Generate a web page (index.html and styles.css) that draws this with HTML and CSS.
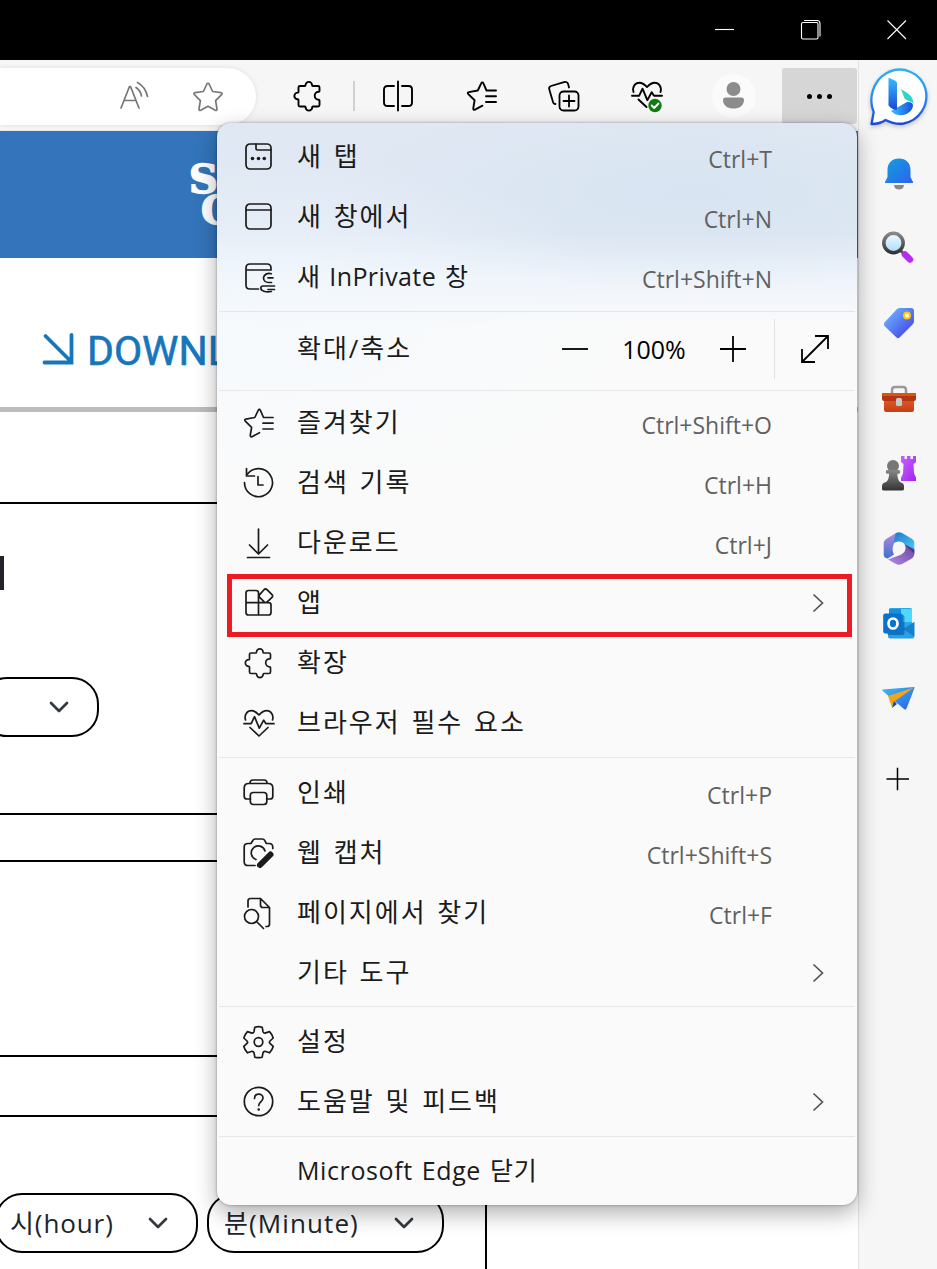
FILE: index.html
```html
<!DOCTYPE html>
<html lang="ko">
<head>
<meta charset="utf-8">
<title>Microsoft Edge</title>
<link rel="stylesheet" href="styles.css">
</head>
<body>
<svg class="defs" width="0" height="0">
  <defs>
    <symbol id="puzzle" viewBox="0 0 32 32"><path d="M6.5 7.500q0-1.500 1.500-1.500h4.800q.7 0 .7-.8a3.300 3.300 0 0 1 6.600 0q0 .8.700.8h5.200q1.500 0 1.500 1.500v3.500q0 .8-.8.800a4 4 0 0 0 0 8q.8 0 .8.800v4.400q0 1.500-1.500 1.500h-5q-.8 0-.8.800a3.300 3.300 0 0 1-6.600 0q0-.8-.8-.8H8q-1.500 0-1.500-1.500v-4.900q0-.8-.8-.8a3.300 3.300 0 0 1 0-6.700q.8 0 .8-.7z"/></symbol>
    <symbol id="favs" viewBox="0 0 32 32"><path d="M30 10.500h-9.500l-3.100-7.200c-.5-1.200-1.700-1.200-2.200 0l-3.400 7.200-9 1.600c-1.300.2-1.300 1.300-.5 2l6.300 6.200-1.300 7.800c-.2 1.500.7 2.100 1.700 1.600l7.500-4M20 16.200h10M20 22h10"/></symbol>
    <symbol id="heart" viewBox="0 0 32 32"><path d="M2.500 13C1 8 4 3.700 8.500 3.700c3.500 0 5.500 2.300 7.500 4.300 2-2 4-4.300 7.500-4.300C28 3.700 31 8 29.500 13M1 16.700h7.200l3.300-7 4.800 11.500 4.400-8 2.300 3.500H31M7 20.500l9 8.500 9-8.500"/></symbol>
    <symbol id="chev" viewBox="0 0 12 20"><path d="M1.500 1.500 10.500 10l-9 8.500"/></symbol>
    <symbol id="down" viewBox="0 0 20 12"><path d="m2 2 8 8 8-8"/></symbol>
    <linearGradient id="gb" x1="0" y1="0" x2="0" y2="1"><stop offset="0" stop-color="#2cb0f0"/><stop offset=".5" stop-color="#2a8cf0"/><stop offset="1" stop-color="#1b49d6"/></linearGradient>
    <linearGradient id="gbar" x1="0" y1="0" x2="0" y2="1"><stop offset="0" stop-color="#37bdff"/><stop offset="1" stop-color="#1a4ad8"/></linearGradient>
    <linearGradient id="gbowl" x1="0" y1="0" x2="1" y2="0"><stop offset="0" stop-color="#36c3fa"/><stop offset="1" stop-color="#1b4fe0"/></linearGradient>
    <linearGradient id="gbell" x1="0" y1="0" x2="1" y2="1"><stop offset="0" stop-color="#13a0dc"/><stop offset="1" stop-color="#2c63f0"/></linearGradient>
    <linearGradient id="gtag" x1="0" y1="0" x2="1" y2="1"><stop offset="0.1" stop-color="#70b4ff"/><stop offset="1" stop-color="#3a35e4"/></linearGradient>
    <linearGradient id="ggray" x1="0" y1="0" x2="0" y2="1"><stop offset="0" stop-color="#888"/><stop offset="1" stop-color="#333"/></linearGradient>
    <linearGradient id="gpurple" x1="0" y1="0" x2="1" y2="1"><stop offset="0" stop-color="#c465ff"/><stop offset="1" stop-color="#a422ef"/></linearGradient>
    <linearGradient id="gred" x1="0" y1="0" x2="0" y2="1"><stop offset="0" stop-color="#e8642c"/><stop offset="1" stop-color="#c43e17"/></linearGradient>
    <linearGradient id="glens" x1="0" y1="0" x2="0" y2="1"><stop offset="0" stop-color="#f3fbff"/><stop offset="1" stop-color="#a9dafa"/></linearGradient>
    <linearGradient id="gteal" x1="0" y1="0" x2="1" y2="1"><stop offset="0" stop-color="#2370cc"/><stop offset="1" stop-color="#45d6f4"/></linearGradient>
    <linearGradient id="glilac" x1="1" y1="0" x2="0" y2="1"><stop offset="0" stop-color="#64449e"/><stop offset="1" stop-color="#b58be8"/></linearGradient>
    <linearGradient id="gleft" x1="0" y1="0" x2="0" y2="1"><stop offset="0" stop-color="#b38bdd"/><stop offset="1" stop-color="#3c6fce"/></linearGradient>
    <linearGradient id="gsky" x1="0" y1="0" x2="1" y2="1"><stop offset="0" stop-color="#3cbdf3"/><stop offset="1" stop-color="#2b5fe8"/></linearGradient>
  </defs>
</svg>

<header class="titlebar">
  <svg width="20" height="20"><path d="M0 9.500h19"/></svg>
  <svg width="20" height="20"><rect x=".5" y="2.500" width="16.500" height="16.500" rx="1.500"/><path d="M3 .5h13q3 0 3 3v13"/></svg>
  <svg width="20" height="20"><path d="m.5.5 18.500 18.500M19 .5.500 19"/></svg>
</header>

<div class="body">
  <div class="main">
    <div class="toolbar">
      <div class="url">
        <svg width="32" height="32" viewBox="0 0 32 32"><path d="m3 27 8.500-21.500h1L21 27M6 19.500h12M18 6.500q4.500 3 5.500 8.500M19.500 1.500q8 4.500 10 14"/></svg>
        <svg width="32" height="32" viewBox="0 0 32 32"><path d="M14.900 3c.5-1 1.700-1 2.200 0l3.500 7.500 8.300 1.100c1.200.2 1.500 1.300.7 2.100l-6 5.900 1.400 8.400c.2 1.200-.7 1.800-1.700 1.300L16 25.300l-7.300 4c-1 .5-1.900-.1-1.700-1.300l1.400-8.400-6-5.900c-.8-.8-.5-1.900.7-2.100l8.300-1.100z"/></svg>
      </div>
      <div class="tools">
        <svg class="t-puzzle" width="32" height="32"><use href="#puzzle"/></svg>
        <span class="divider"></span>
        <svg class="t-split" width="32" height="32" viewBox="0 0 32 32"><path d="M12 6H5.500Q2 6 2 9.500v13Q2 26 5.500 26H12M20 6h6.500Q30 6 30 9.500v13q0 3.500-3.500 3.500H20M16 1.500v29"/></svg>
        <svg class="t-favs" width="32" height="32"><use href="#favs"/></svg>
        <svg class="t-coll" width="32" height="32" viewBox="0 0 32 32"><rect x="11.500" y="11.500" width="19" height="19" rx="4"/><path d="M21 15.500v11M15.500 21h11M7.500 24c-1.500.3-2.200-.7-2.500-2L1.300 9.500C.7 7.500 1.500 6.500 3 6l13-3.800c2-.6 3.700 0 4.200 2l.8 3.300"/></svg>
        <svg class="t-heart" width="32" height="34" viewBox="0 0 32 34"><path d="M2.500 13C1 8 4 3.700 8.500 3.700c3.500 0 5.500 2.300 7.500 4.300 2-2 4-4.300 7.500-4.300C28 3.700 31 8 29.500 13M1 16.700h7.200l3.300-7 4.800 11.500 4.400-8 2.300 3.500H31M7.500 20.500 15.500 28"/><circle cx="24" cy="26.500" r="6.700" fill="#107c10" stroke="none"/><path d="m20.700 26.500 2.500 2.500 4.300-4.500" stroke="#fff"/></svg>
        <svg class="avatar" width="44" height="44" viewBox="0 0 44 44"><circle cx="22" cy="22" r="22" fill="#fbfbfb"/><circle cx="21.500" cy="15" r="7"/><path d="M11 26q0-2.500 2.500-2.500h16q2.500 0 2.500 2.500c0 6-5 8.500-10.500 8.500S11 32 11 26"/></svg>
        <div class="more"><i></i><i></i><i></i></div>
      </div>
    </div>

    <div class="page">
      <div class="banner"><div class="logo"><b>S</b><b class="second">O</b></div></div>
      <div class="download">
        <svg width="32" height="32" viewBox="0 0 32 32"><path d="m2.500 2 26 26M28.500 1v27.500H1.500"/></svg>
        <span>DOWNL</span>
      </div>
      <div class="box box-a">
        <div class="heading-end"></div>
        <div class="select select-a"><svg width="20" height="12"><use href="#down"/></svg></div>
      </div>
      <div class="box box-b"></div>
      <div class="box box-c">
        <div class="select hour"><span>시(hour)</span><svg width="20" height="12"><use href="#down"/></svg></div>
        <div class="select minute"><span>분(Minute)</span><svg width="20" height="12"><use href="#down"/></svg></div>
      </div>
    </div>
  </div>

  <aside class="sidebar">
    <svg class="bing" width="60" height="62" viewBox="0 0 60 62"><path d="M2.500 57 4.700 45C-1 32 4 14 17 6.500 33-3 52 6 56.500 22c4 17-7 32-22 34.500-7 1-13-1-18-3.500-4 3-8 4-14 4z" fill="#fff" stroke="url(#gb)" stroke-width="2.300" stroke-linejoin="round"/><path d="m32 22 7 4.500q5.500 4 5.500 11-1-3-6-4l-3-2z" fill="#2bd6c8"/><path d="m22 44 16-9q6-.5 6 4c-1 6-8 10.500-14.500 9q-5-1-7.500-4" fill="url(#gbowl)"/><path d="m19.500 10.700 6.500 2.800q2 .8 2 3v26q-4.500 1-8.500-4z" fill="url(#gbar)"/></svg>
    <svg class="app" viewBox="0 0 40 40"><path d="M15 31h10q-.5 4.500-5 4.500T15 31" fill="#888"/><path d="M8.500 16C8.500 9 13 4.500 20 4.500S31.500 9 31.500 16v7l2.500 5v1H6v-1l2.500-5z" fill="url(#gbell)"/></svg>
    <svg class="app" viewBox="0 0 40 40"><path d="m21 21 5 5" stroke="#555" stroke-width="3"/><circle cx="14.500" cy="14" r="9.700" fill="url(#glens)" stroke="url(#ggray)" stroke-width="3.500"/><path d="m26 25.500 5 5" stroke="#b52df2" stroke-width="6.500" stroke-linecap="round"/></svg>
    <svg class="app" viewBox="0 0 40 40"><path d="M18 5q1-1 3-1h11q3 0 3 3v10q0 2-1.500 3.500L20.500 33.500q-1.500 1.500-3 0l-12-11.500q-1.500-2 0-3.500z" fill="url(#gtag)"/><circle cx="28" cy="11.500" r="3" fill="#fff8d0" stroke="#ffc800" stroke-width="2"/></svg>
    <svg class="app" viewBox="0 0 40 40"><path d="M13 14v-3q0-3 3-3h8q3 0 3 3v3" fill="none" stroke="#999" stroke-width="2.500"/><rect x="5" y="16" width="30" height="17" rx="2" fill="url(#gred)"/><path d="M4 14h32q1 0 1 1v5q0 2-2 2H5q-2 0-2-2v-5q0-1 1-1" fill="#b53414"/><path d="M4 14h32q1 0 1 1v2H3v-2q0-1 1-1" fill="#df540d"/><rect x="17" y="19" width="6" height="8" rx="1.500" fill="#c8c8c8"/></svg>
    <svg class="app" viewBox="0 0 40 40"><path d="M22 2h3.500v3h2.500V2h3.500v3H34V2h3v6l-2.500 2 .5 9.500 2 4V27H22v-3l2-4.500.5-9.500L22 8z" fill="url(#gpurple)"/><circle cx="14" cy="12" r="6" fill="#777"/><path d="M7.500 16h13q1.500 2 0 3.800h-2.200q.5 7 2.700 8.200 4 1 4 4v3q0 1.500-2 1.500H5q-2 0-2-1.500v-3q0-3 4-4 2.700-1.200 3.200-8.200H7.500q-1.500-1.800 0-3.800" fill="url(#ggray)"/></svg>
    <svg class="app" viewBox="0 0 40 40"><path d="M16.500 4.300q3.500-2 7 0l8.500 5Q35.300 11 35.300 14v8.500L26 16.500q-1-4-7-4l-6 2z" fill="url(#gteal)"/><path d="M16.500 4.300 8 9.500q-3.300 2-3.300 5V25.500q0 3.500 4 4l6.300-4q-2.500-4-.5-9 1-3.500 1-7.500 0-3 1-4.700" fill="url(#gleft)"/><path d="M35.300 20 26 15.500q2 6-3 9.500-3 1.500-6 2.500l-8 3 7.500 4.300q3.500 2 7 0l8.500-4.800q3.300-2 3.300-5.500z" fill="url(#glilac)"/><path d="m26 15.500 9.300 5.500v4z" fill="#33257a" opacity=".6"/><circle cx="20" cy="19.200" r="6.200" fill="#f6f6f6"/></svg>
    <svg class="app" viewBox="0 0 40 40"><rect x="10" y="4" width="23" height="27" rx="1.500" fill="#28a8ea"/><path d="M22 5h10q1 0 1 1v12H22z" fill="#50d9ff"/><path d="M10 5h12v8H10z" fill="#1a90d8"/><path d="m24 25 11.300-7v14.500q0 2-2 2H11q-2 0-2-2V25z" fill="#26a0e8"/><path d="m24 25 11.300 7.500V18z" fill="#1680cc"/><rect x="8" y="11" width="17.500" height="20" rx="2" fill="#0a3b65" opacity=".45"/><rect x="4.200" y="9.500" width="19.500" height="20" rx="2" fill="#0873cf"/><ellipse cx="14" cy="19.500" rx="4.500" ry="5" fill="none" stroke="#fff" stroke-width="2.700"/></svg>
    <svg class="app" viewBox="0 0 40 40"><path d="M3.500 10.500 35 8q1 0 .5 1l-8 20.500q-1 2-2.500.5L9 16.500l-5.500-4.700q-.5-1 0-1.300" fill="url(#gsky)"/><path d="M35 8.500 9 17l4 11.500 3-6.500z" fill="#f4a517"/><path d="m15 22-2 7 5-4z" fill="#174aa8"/></svg>
    <svg class="plus" width="24" height="24"><path d="M0.500 12h22.500M11.500.7v22.500"/></svg>
  </aside>
</div>

<nav class="menu">
  <div class="group g1">
    <div class="item"><svg class="ico" viewBox="0 0 32 32"><rect x="3" y="3" width="25" height="25" rx="4"/><path d="M13 3v4.500q0 1.500 1.500 1.500H28"/><g class="dot"><circle cx="9.500" cy="17.500" r="1.800"/><circle cx="15.500" cy="17.500" r="1.800"/><circle cx="21.300" cy="17.500" r="1.800"/></g></svg><span class="label">새 탭</span><kbd>Ctrl+T</kbd></div>
    <div class="item"><svg class="ico" viewBox="0 0 32 32"><rect x="3" y="3" width="25" height="25" rx="4"/><path d="M3 9h25"/></svg><span class="label">새 창에서</span><kbd>Ctrl+N</kbd></div>
    <div class="item"><svg class="ico" viewBox="0 0 32 32"><path d="M15.500 28H7q-4 0-4-4V7q0-4 4-4h17q4 0 4 4v2H3M28.300 12.700c-4-1-7.300.8-7.800 4 0 3 2.300 4.800 5 4.800h3M25 16.800h5M31.500 25H20q-2 0-2.200 2c0 3 5 4.500 10.500 3.500M25 28.500h6.500"/></svg><span class="label in">새 InPrivate 창</span><kbd>Ctrl+Shift+N</kbd></div>
  </div>
  <div class="zoomrow">
    <span class="label">확대/축소</span>
    <svg width="26" height="26"><path d="M0 13h26"/></svg>
    <span class="pct">100%</span>
    <svg width="26" height="26"><path d="M0 13h26M13 0v26"/></svg>
    <div class="full"><svg width="28" height="28"><path d="M1.500 26.500l25-25M14 1h13v13M1 14v13h13"/></svg></div>
  </div>
  <div class="group g2">
    <div class="item"><svg class="ico" viewBox="0 0 32 32"><use href="#favs"/></svg><span class="label">즐겨찾기</span><kbd>Ctrl+Shift+O</kbd></div>
    <div class="item"><svg class="ico" viewBox="0 0 32 32"><path d="M1.500 15.500A14 14 0 1 0 4.500 7M3.500 1.500V9h8M15 9.500V18h5"/></svg><span class="label">검색 기록</span><kbd>Ctrl+H</kbd></div>
    <div class="item"><svg class="ico" viewBox="0 0 32 32"><path d="M15.500 2v24M6.500 18l9 9 9-9M4.500 30.500h22"/></svg><span class="label">다운로드</span><kbd>Ctrl+J</kbd></div>
    <div class="item boxed"><svg class="ico" viewBox="0 0 32 32"><path d="M15.500 15.700V6q0-2.500-2.500-2.500H5.500Q3 3.500 3 6v19.500Q3 28 5.500 28h20q2.500 0 2.500-2.500V18q0-2.300-2.500-2.300H3M15.500 15.700V28M21 2.700q1.500-1.400 3 0l5 5q1.200 1.300 0 2.600l-4.800 4.600q-1.500 1.400-3 0l-4.500-4.500q-1.300-1.400 0-2.800z"/></svg><span class="label">앱</span><svg class="chev"><use href="#chev"/></svg></div>
    <div class="item"><svg class="ico" viewBox="0 0 32 32"><use href="#puzzle"/></svg><span class="label">확장</span></div>
    <div class="item"><svg class="ico" viewBox="0 0 32 32"><use href="#heart"/></svg><span class="label">브라우저 필수 요소</span></div>
  </div>
  <div class="group g3">
    <div class="item"><svg class="ico" viewBox="0 0 32 32"><path d="M7 6q0-3 3-3h11q3 0 3 3M7.500 22H4q-2.800 0-2.800-2.800V11q0-4.500 4.500-4.500h19.600q4.500 0 4.500 4.500v8.200Q29.800 22 27 22h-3.300"/><rect x="7.300" y="15.500" width="16.500" height="12" rx="3"/></svg><span class="label">인쇄</span><kbd>Ctrl+P</kbd></div>
    <div class="item"><svg class="ico" viewBox="0 0 32 32"><path d="M12 28.500H5q-3.800 0-3.800-3.800V10q0-3.500 3.800-3.500h3l2-3.300Q10.600 2 12 2h7.500q1.400 0 2 1.200l1.900 3.300h2.800q3.600 0 3.600 4v1M22 14a7 7 0 1 0-9 8.500"/><path d="m17 28 10.500-10.500" stroke-width="6"/></svg><span class="label">웹 캡처</span><kbd>Ctrl+Shift+S</kbd></div>
    <div class="item"><svg class="ico" viewBox="0 0 32 32"><path d="M5 10V4q0-2.500 2.500-2.500h10l9 9V27q0 2.500-2.500 2.500h-1M17.500 1.500V8q0 2.500 2.500 2.500h6.500M14 25l6.500 6.500"/><circle cx="8.500" cy="19.500" r="7"/></svg><span class="label">페이지에서 찾기</span><kbd>Ctrl+F</kbd></div>
    <div class="item"><span class="ico"></span><span class="label">기타 도구</span><svg class="chev"><use href="#chev"/></svg></div>
  </div>
  <div class="group g4">
    <div class="item"><svg class="ico" viewBox="0 0 32 32"><path d="M11.800 1.200q3.700-1 7.400 0l.8 4.500q.6 1.500 2 1.400l4.500-1.500q2.800 2.800 3.700 6.400L27 15q-1.200 1.200 0 2.400l3.200 3q-1 3.600-3.700 6.400L22 25.300q-1.500-.1-2 1.400l-.8 4.500q-3.700 1-7.400 0l-.8-4.500q-.6-1.500-2-1.400l-4.500 1.500Q1.800 24 .8 20.400l3.200-3q1.200-1.200 0-2.400L.8 12q1-3.600 3.700-6.400L9 7.100q1.500.1 2-1.400z"/><circle cx="15.500" cy="16" r="4.300"/></svg><span class="label">설정</span></div>
    <div class="item"><svg class="ico" viewBox="0 0 32 32"><circle cx="15.500" cy="15.500" r="14.200"/><path d="M11.500 12.500c0-6 8.500-5.500 8.500-.5 0 3.700-4.300 4-4.300 7.500"/><g class="dot"><circle cx="15.700" cy="23.500" r="1.300"/></g></svg><span class="label">도움말 및 피드백</span><svg class="chev"><use href="#chev"/></svg></div>
  </div>
  <div class="group g5">
    <div class="item"><span class="ico"></span><span class="label edge">Microsoft Edge 닫기</span></div>
  </div>
</nav>
</body>
</html>
```
FILE: styles.css
```css
*, *::before, *::after { box-sizing: border-box; }
body {
  margin: 0;
  width: 937px;
  height: 1269px;
  overflow: hidden;
  position: relative;
  background: #fff;
  font-family: "Open Sans", "Noto Sans CJK KR", sans-serif;
}
svg { display: block; flex: none; fill: none; overflow: visible; }
.defs { position: absolute; }

.titlebar {
  height: 60px;
  background: #000;
  display: flex;
  justify-content: flex-end;
  align-items: center;
  gap: 66px;
  padding-right: 30px;
}
.titlebar svg { stroke: #fff; stroke-width: 1.1; }

.body { display: flex; height: 1209px; }
.main { width: 858px; overflow: hidden; }

.toolbar {
  height: 71px;
  background: #f6f6f6;
  border-bottom: 1px solid #e8e8e8;
  display: flex;
  padding-top: 8px;
}
.url {
  width: 256px;
  height: 57px;
  background: #fff;
  border-radius: 0 29px 29px 0;
  box-shadow: 0 0 5px rgba(0, 0, 0, .1);
  display: flex;
  align-items: center;
  justify-content: flex-end;
  gap: 42px;
  padding-right: 32px;
}
.url svg { stroke: #777; stroke-width: 1.7; stroke-linecap: round; stroke-linejoin: round; }
.tools { display: flex; align-items: center; height: 56px; }
.tools svg { stroke: #000; stroke-width: 1.9; stroke-linecap: round; stroke-linejoin: round; }
.t-puzzle { margin-left: 36px; }
.divider { width: 2px; height: 30px; background: #cfcfcf; margin-left: 29px; }
.t-split { margin-left: 27px; }
.t-favs { margin-left: 52px; }
.t-coll { margin-left: 50px; }
.tools .t-coll { stroke-width: 1.8; }
.t-heart { margin-left: 51px; }
.tools .avatar { margin-left: 49px; fill: #8c8c8c; stroke: none; }
.more {
  margin-left: 26px;
  width: 75px;
  height: 56px;
  background: #d6d6d6;
  border-radius: 3px;
  display: flex;
  align-items: center;
  justify-content: center;
  gap: 5px;
}
.more i { width: 5px; height: 5px; border-radius: 50%; background: #000; }

.page { background: #fff; height: 1138px; }
.banner { height: 127px; background: #3374ba; padding: 32px 0 0 189px; }
.logo { color: #fff; font-family: "DejaVu Serif", serif; font-size: 40px; line-height: 31px; width: 60px; }
.logo b { display: block; -webkit-text-stroke: 1.6px #fff; }
.logo .second { padding-left: 12px; }
.download {
  height: 154px;
  border-bottom: 5px solid #bdbdbd;
  display: flex;
  align-items: flex-start;
  gap: 12px;
  padding: 76px 0 0 43px;
  color: #1676bc;
}
.download svg { stroke: #1676bc; stroke-width: 3.8; stroke-linecap: round; }
.download span { font: 400 41px/32px Roboto, sans-serif; padding-top: 1px; -webkit-text-stroke: .6px #1676bc; }

.box { width: 487px; border: 2px solid #000; border-left: 0; }
.box-a { height: 313px; margin-top: 90px; padding-top: 52px; }
.heading-end { width: 4px; height: 34px; background: #22242a; }
.box-b { height: 197px; margin-top: 45px; }
.box-c { height: 200px; margin-top: 58px; padding-top: 76px; display: flex; gap: 9px; }
.select {
  height: 60px;
  border: 2px solid #000;
  border-radius: 27px;
  background: #fff;
  color: #20242b;
  font-size: 26px;
  letter-spacing: .9px;
  white-space: nowrap;
  display: flex;
  align-items: center;
  justify-content: space-between;
}
.select span { margin-top: -2px; }
.select svg { stroke: #343a40; stroke-width: 2.7; stroke-linecap: round; stroke-linejoin: round; }
.select-a { width: 119px; margin: 87px 0 0 -20px; justify-content: flex-end; padding-right: 28px; }
.hour { width: 203px; margin-left: -5px; padding: 0 28px 0 13px; }
.minute { width: 237px; padding: 0 28px 0 15px; letter-spacing: 1.1px; }

.sidebar {
  width: 79px;
  background: #f6f6f6;
  border-left: 1px solid #e2e2e2;
  padding: 7px 0 0 10px;
}
.bing { filter: drop-shadow(0 2px 2px rgba(0, 0, 0, .2)); }
.app { width: 40px; height: 40px; margin: 0 0 35px 10px; }
.bing + .app { margin-top: 25px; }
.plus { margin: 48px 0 0 17px; stroke: #000; stroke-width: 1.5; }

.menu {
  position: absolute;
  left: 217px;
  top: 123px;
  width: 640px;
  height: 1082px;
  border-radius: 14px;
  overflow: hidden;
  color: #1b1b1b;
  background:
    radial-gradient(ellipse 350px 170px at 60px 200px, rgba(243, 249, 254, .7), rgba(243, 249, 254, 0)),
    radial-gradient(ellipse 360px 100px at 480px 70px, rgba(211, 226, 240, .65), rgba(211, 226, 240, 0)),
    linear-gradient(#e0e8f3 0, #e0e8f4 110px, #eff4fa 155px, #fafafa 205px);
  background-color: #fafafa;
  box-shadow: 0 0 3px rgba(0, 0, 0, .35), 0 8px 22px rgba(0, 0, 0, .32);
}
.group { margin: 0 2px; border-top: 1px solid #e6e7e8; }
.g1 { height: 188px; border: 0; padding-top: 4px; }
.g2 { height: 367px; padding-top: 2px; }
.g3 { height: 249px; padding-top: 5px; }
.g4 { height: 130px; padding-top: 5px; }
.g5 { padding-top: 4px; }
.item { height: 60px; display: flex; align-items: center; padding: 0 31px 0 24px; }
.ico { width: 32px; height: 32px; flex: none; stroke: #1b1b1b; stroke-width: 1.7; stroke-linecap: round; stroke-linejoin: round; }
.dot { fill: #1b1b1b; stroke: none; }
.label {
  flex: 1;
  margin-left: 22px;
  padding-bottom: 2px;
  font-size: 26px;
  line-height: 36px;
  letter-spacing: 2px;
  word-spacing: 2px;
  white-space: nowrap;
}
.label.in, .label.edge { font-size: 25px; letter-spacing: .6px; }
.label.in { letter-spacing: .4px; }
kbd { font: 23px/32px "Open Sans", sans-serif; color: #616161; margin-right: 52px; padding-top: 3px; }
.chev { width: 12px; height: 20px; stroke: #555; stroke-width: 1.7; }
.boxed { position: relative; }
.boxed::after {
  content: "";
  position: absolute;
  left: 8px;
  top: 1px;
  width: 625px;
  height: 63px;
  border: 5px solid #ed1c24;
}
.zoomrow {
  height: 79px;
  margin: 0 2px;
  border-top: 1px solid #e3e7ea;
  display: flex;
  align-items: center;
  padding: 0 1px 4px 56px;
}
.zoomrow svg { stroke: #000; stroke-width: 1.8; }
.zoomrow .pct { width: 64px; margin: 0 34px; font-size: 25px; color: #000; white-space: nowrap; display: flex; justify-content: center; }
.full { margin-left: 28px; width: 80px; height: 60px; border-left: 1px solid #e2e2e2; display: flex; align-items: center; justify-content: center; }
```
